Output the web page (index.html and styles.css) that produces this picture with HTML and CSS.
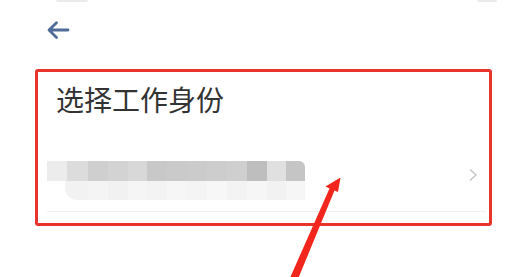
FILE: index.html
```html
<!DOCTYPE html>
<html lang="zh-CN">
<head>
<meta charset="utf-8">
<title>选择工作身份</title>
<link rel="stylesheet" href="styles.css">
</head>
<body>
<div class="status"><span class="pill pill-l"></span><span class="pill pill-r"></span></div>
<header class="nav">
  <svg class="back" width="24" height="22" viewBox="0 0 24 22" aria-label="返回">
    <path d="M22 10H3.5M10.5 2.8 3 10l7.5 7.4" fill="none" stroke="#4f6b97" stroke-width="2.8" stroke-linecap="round" stroke-linejoin="round"/>
  </svg>
</header>
<section class="card">
  <h1 class="title">选择工作身份</h1>
  <div class="row">
    <div class="mosaic"><div class="m-top"></div><div class="m-bottom"></div></div>
    <svg class="chev" width="10" height="14" viewBox="0 0 10 14"><path d="M2 1.5 8 7l-6 5.5" fill="none" stroke="#c4c4c4" stroke-width="1.4"/></svg>
  </div>
  <div class="divider"></div>
</section>
<svg class="annot" width="530" height="277" viewBox="0 0 530 277">
  <polygon points="340.5,177.5 325.5,186.5 329.5,188.5 289.5,279 298,279 334.5,190.5 338,192" fill="#f2261c"/>
</svg>
</body>
</html>
```
FILE: styles.css
```css
html, body {
  margin: 0;
  padding: 0;
  background: #ffffff;
}
body {
  position: relative;
  width: 530px;
  height: 277px;
  overflow: hidden;
  font-family: "Noto Sans CJK SC", "Noto Sans", sans-serif;
}
.status {
  height: 3px;
  display: flex;
  justify-content: space-between;
  padding: 0 33px 0 56px;
}
.pill {
  display: block;
  height: 2px;
  background: #ebebeb;
  border-radius: 0 0 2px 2px;
}
.pill-l { width: 32px; }
.pill-r { width: 20px; }
.nav {
  box-sizing: border-box;
  height: 66px;
  padding: 17px 0 0 46px;
}
.back { display: block; }
.card {
  margin: 0 38px 0 35px;
  border: 3px solid #e8352b;
  border-radius: 3px;
}
.title {
  margin: 0;
  padding: 13px 0 0 18px;
  font-size: 28px;
  line-height: 28px;
  font-weight: 400;
  color: #333333;
  letter-spacing: 0;
}
.row {
  margin-top: 48px;
  display: flex;
  justify-content: space-between;
  align-items: flex-start;
  padding: 0 11px 0 9px;
}
.mosaic { width: 258px; }
.m-top {
  height: 20px;
  border-radius: 0 6px 0 0;
  background: linear-gradient(to right,
    #ececec 0 20px, #dcdcdc 20px 41px, #cfcfcf 41px 61px, #d3d3d3 61px 81px,
    #d8d8d8 81px 100px, #c8c8c8 100px 120px, #cacaca 120px 140px, #cbcbcb 140px 160px,
    #cdcdcd 160px 180px, #cfcfcf 180px 200px, #bebebe 200px 220px, #e0e0e0 220px 239px,
    #c5c5c5 239px 258px);
}
.m-bottom {
  height: 19px;
  margin-left: 18px;
  border-radius: 0 0 0 12px;
  background: linear-gradient(to right,
    #f2f2f2 0 23px, #f4f4f4 23px 43px, #f1f1f1 43px 63px, #f5f5f5 63px 82px,
    #f3f3f3 82px 102px, #f6f6f6 102px 122px, #f4f4f4 122px 142px, #f7f7f7 142px 162px,
    #f3f3f3 162px 182px, #f6f6f6 182px 202px, #f2f2f2 202px 221px, #f6f6f6 221px 240px);
}
.chev {
  display: block;
  margin-top: 7px;
}
.divider {
  margin: 11px 3px 11px 9px;
  height: 1px;
  background: #f0f0f0;
}
.annot {
  position: absolute;
  left: 0;
  top: 0;
  pointer-events: none;
}
```
